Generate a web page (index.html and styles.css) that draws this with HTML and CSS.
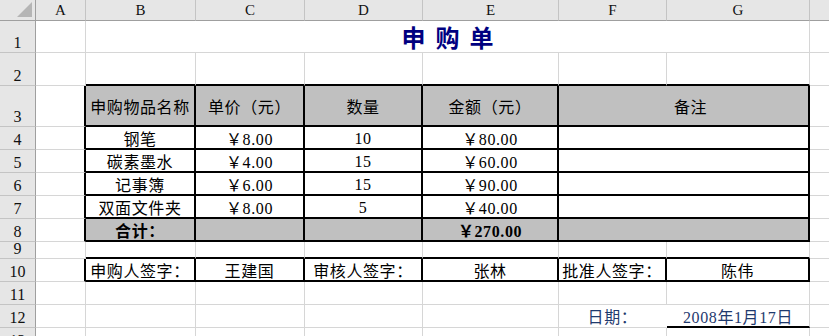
FILE: index.html
```html
<!DOCTYPE html>
<html lang="zh-CN">
<head>
<meta charset="utf-8">
<title>申购单</title>
<link rel="stylesheet" href="styles.css">
</head>
<body>
<div class="sheet">
  <div class="corner"><span class="tri"></span></div>
  <div class="ch">A</div><div class="ch">B</div><div class="ch">C</div><div class="ch">D</div>
  <div class="ch">E</div><div class="ch">F</div><div class="ch">G</div><div class="ch">H</div>

  <div class="rh">1</div><div class="c"></div>
  <div class="c title s6"><span class="title-text">申购单</span></div>
  <div class="c"></div>

  <div class="rh">2</div><div class="c"></div>
  <div class="c kb"></div><div class="c kb"></div><div class="c kb"></div><div class="c kb"></div><div class="c kb"></div><div class="c kb"></div>
  <div class="c"></div>

  <div class="rh">3</div><div class="c kr"></div>
  <div class="c t k fill">申购物品名称</div>
  <div class="c t k fill">单价（元）</div>
  <div class="c t k fill">数量</div>
  <div class="c t k fill">金额（元）</div>
  <div class="c t k fill s2 note">备注</div>
  <div class="c"></div>

  <div class="rh">4</div><div class="c kr"></div>
  <div class="c t k">钢笔</div><div class="c t k">￥8.00</div><div class="c t k num">10</div><div class="c t k">￥80.00</div>
  <div class="c k s2"></div><div class="c"></div>

  <div class="rh">5</div><div class="c kr"></div>
  <div class="c t k">碳素墨水</div><div class="c t k">￥4.00</div><div class="c t k num">15</div><div class="c t k">￥60.00</div>
  <div class="c k s2"></div><div class="c"></div>

  <div class="rh">6</div><div class="c kr"></div>
  <div class="c t k">记事簿</div><div class="c t k">￥6.00</div><div class="c t k num">15</div><div class="c t k">￥90.00</div>
  <div class="c k s2"></div><div class="c"></div>

  <div class="rh">7</div><div class="c kr"></div>
  <div class="c t k">双面文件夹</div><div class="c t k">￥8.00</div><div class="c t k num">5</div><div class="c t k">￥40.00</div>
  <div class="c k s2"></div><div class="c"></div>

  <div class="rh">8</div><div class="c kr"></div>
  <div class="c t k fill bold">合计：</div><div class="c k fill"></div><div class="c k fill"></div>
  <div class="c t k fill bold">￥270.00</div>
  <div class="c k fill s2"></div><div class="c"></div>

  <div class="rh">9</div><div class="c"></div>
  <div class="c kb"></div><div class="c kb"></div><div class="c kb"></div><div class="c kb"></div><div class="c kb"></div><div class="c kb"></div>
  <div class="c"></div>

  <div class="rh">10</div><div class="c kr"></div>
  <div class="c t k">申购人签字：</div><div class="c t k">王建国</div>
  <div class="c t k">审核人签字：</div><div class="c t k">张林</div>
  <div class="c t k">批准人签字：</div><div class="c t k">陈伟</div>
  <div class="c"></div>

  <div class="rh">11</div><div class="c"></div><div class="c"></div><div class="c"></div><div class="c"></div>
  <div class="c"></div><div class="c"></div><div class="c"></div><div class="c"></div>

  <div class="rh">12</div><div class="c"></div><div class="c"></div><div class="c"></div><div class="c"></div>
  <div class="c"></div><div class="c t blue nr">日期：</div><div class="c t blue kb">2008年1月17日</div><div class="c"></div>

  <div class="rh">13</div><div class="c"></div><div class="c"></div><div class="c"></div><div class="c"></div>
  <div class="c"></div><div class="c"></div><div class="c"></div><div class="c"></div>
</div>
</body>
</html>
```

FILE: styles.css
```css
html, body {
  margin: 0;
  padding: 0;
  background: #ffffff;
  overflow: hidden;
}

.sheet {
  display: grid;
  grid-template-columns: 36px 50px 110px 109px 118px 136px 108px 143px 60px;
  grid-template-rows: 21px 32px 33px 41px 23px 23px 23px 23px 23px 17px 23px 23px 23px 23px;
  width: 890px;
  font-family: "Liberation Serif", "Noto Sans CJK SC", serif;
}

.corner {
  background: #e6e6e6;
  border-right: 1px solid #9f9f9f;
  border-bottom: 1px solid #9f9f9f;
  box-sizing: border-box;
  display: flex;
  align-items: flex-end;
  justify-content: flex-end;
  padding: 0 3px 3px 0;
}

.tri {
  width: 0;
  height: 0;
  border-left: 15px solid transparent;
  border-bottom: 15px solid #b5b5b5;
}

.ch {
  background: #e6e6e6;
  border-right: 1px solid #c4c4c4;
  border-bottom: 1px solid #9f9f9f;
  box-sizing: border-box;
  display: flex;
  align-items: center;
  justify-content: center;
  font-family: "Liberation Serif", serif;
  font-size: 15px;
  color: #111;
  overflow: hidden;
}

.rh {
  background: #e6e6e6;
  border-right: 1px solid #9f9f9f;
  border-bottom: 1px solid #c4c4c4;
  box-sizing: border-box;
  display: flex;
  align-items: flex-end;
  justify-content: center;
  font-family: "Liberation Serif", serif;
  font-size: 16px;
  line-height: 18px;
  color: #111;
  overflow: hidden;
}

.c {
  border-right: 1px solid #d6d6d6;
  border-bottom: 1px solid #d6d6d6;
  box-sizing: border-box;
  background: #ffffff;
  min-width: 0;
  overflow: hidden;
}

.t {
  display: flex;
  align-items: center;
  justify-content: center;
  font-size: 16px;
  letter-spacing: 0.6px;
  color: #000;
  white-space: nowrap;
}

.num { padding-top: 2px; }

.s6 { grid-column: span 6; }
.s2 { grid-column: span 2; }

.k {
  border-right: 2px solid #000;
  border-bottom: 2px solid #000;
}
.kb { border-bottom: 2px solid #000; }
.kr { border-right: 2px solid #000; }
.nr { border-right-color: #ffffff; }

.fill { background: #c0c0c0; }
.bold { font-weight: bold; }

.note { padding-left: 14px; }

.title {
  display: flex;
  align-items: center;
  justify-content: center;
  overflow: visible;
  padding: 2px 0 0 10px;
}

.title-text {
  font-family: "Noto Sans CJK SC", sans-serif;
  font-weight: bold;
  font-size: 24px;
  line-height: 1.2;
  letter-spacing: 10px;
  color: #000080;
}

.blue { color: #1f3a6e; }
```
